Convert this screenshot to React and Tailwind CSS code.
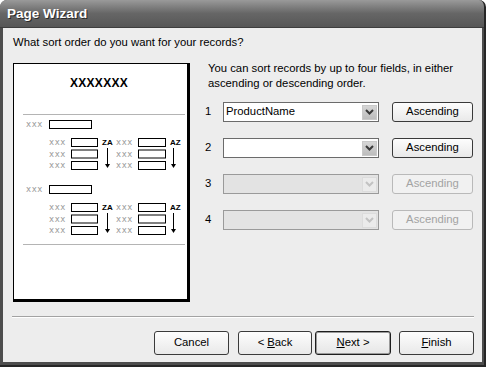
import React from "react";

const FONT = { fontFamily: '"Liberation Sans", Arial, sans-serif' };

function Chevron({ color }) {
  return (
    <svg width="9" height="6" viewBox="0 0 9 6">
      <path d="M1 1 L4.5 4.5 L8 1" fill="none" stroke={color} strokeWidth="2" />
    </svg>
  );
}

function Combo({ value, disabled }) {
  return (
    <div
      className={
        "w-[156px] h-[20px] border flex items-center justify-between pl-[2px] pr-[1px] " +
        (disabled ? "border-[#9a9a9a] bg-[#e3e3e3]" : "border-[#6b6b6b] bg-white")
      }
    >
      <span className="text-[11.3px] text-black leading-none">{value}</span>
      <div
        className={
          "w-[15px] h-[15px] flex items-center justify-center " +
          (disabled ? "bg-[#ebebeb] border border-[#dcdcdc]" : "bg-gradient-to-b from-[#d6d6d6] to-[#bdbdbd] border border-[#c9c9c9]")
        }
      >
        <Chevron color={disabled ? "#c2c2c2" : "#3a3a3a"} />
      </div>
    </div>
  );
}

function Btn({ children, w, disabled, def, h = "h-[20px]" }) {
  return (
    <button
      className={
        w + " " + h +
        " rounded-[3px] border flex items-center justify-center text-[11.3px] leading-none " +
        (disabled
          ? "border-[#b9b9b9] text-[#a3a3a3] bg-[#f1f1f1]"
          : def
          ? "border-[#1e1e1e] text-black bg-gradient-to-b from-[#fafafa] to-[#e6e6e6] shadow-[inset_0_0_0_1px_#9a9a9a]"
          : "border-[#3a3a3a] text-black bg-gradient-to-b from-[#fdfdfd] to-[#e9e9e9]")
      }
      style={FONT}
    >
      {children}
    </button>
  );
}

function X3({ x, y }) {
  return (
    <text x={x} y={y} fontSize="8.5" letterSpacing="0.6" fill="#9c9c9c" fontFamily="DejaVu Sans, sans-serif">xxx</text>
  );
}

function Group({ dy }) {
  const rows = [74, 85.5, 97];
  return (
    <g transform={`translate(0 ${dy})`}>
      <X3 x={12} y={63} />
      <rect x="35.5" y="56.5" width="42" height="8" fill="white" stroke="black" />
      {rows.map((y, i) => (
        <g key={i}>
          <X3 x={35} y={y + 7} />
          <rect x="57.5" y={y + 0.5} width="26" height="8" fill="white" stroke="black" />
          <X3 x={102} y={y + 7} />
          <rect x="124.5" y={y + 0.5} width="27" height="8" fill="white" stroke="black" />
        </g>
      ))}
      <text x="88" y="81" fontSize="8" fontWeight="bold" fill="black" fontFamily="Liberation Sans, Arial, sans-serif">ZA</text>
      <line x1="93.5" y1="84" x2="93.5" y2="101" stroke="black" />
      <path d="M91 100 L96 100 L93.5 104 Z" fill="black" />
      <text x="156" y="81" fontSize="8" fontWeight="bold" fill="black" fontFamily="Liberation Sans, Arial, sans-serif">AZ</text>
      <line x1="159.5" y1="84" x2="159.5" y2="101" stroke="black" />
      <path d="M157 100 L162 100 L159.5 104 Z" fill="black" />
    </g>
  );
}

function Preview() {
  return (
    <div className="w-[177px] h-[239px] shrink-0 bg-white border-l border-t border-black border-r-[3px] border-b-[3px]">
      <svg width="173" height="235" viewBox="0 0 173 235">
        <text x="85" y="23" textAnchor="middle" fontSize="12" fontWeight="bold" letterSpacing="0.3" fill="black" fontFamily="Liberation Sans, Arial, sans-serif">XXXXXXX</text>
        <line x1="9" y1="50.5" x2="171" y2="50.5" stroke="#b4b4b4" />
        <Group dy={0} />
        <Group dy={65} />
        <line x1="9" y1="180.5" x2="171" y2="180.5" stroke="#b4b4b4" />
      </svg>
    </div>
  );
}

function Row({ n, value, disabled }) {
  return (
    <div className="h-[36px] flex items-center">
      <span className="w-[18px] text-[11.3px] text-black leading-none">{n}</span>
      <Combo value={value} disabled={disabled} />
      <div className="ml-[13px]">
        <Btn w="w-[81px]" disabled={disabled}>Ascending</Btn>
      </div>
    </div>
  );
}

export default function App() {
  return (
    <div className="w-[486px] h-[367px] flex flex-col bg-[#4d4d4d] rounded-t-[7px] overflow-hidden border-r-[2px] border-b-[2px] border-[#262626]" style={FONT}>
      <div className="h-[28px] shrink-0 flex items-center pl-[7px] bg-gradient-to-b from-[#9a9a9a] via-[#666666] to-[#575757] border-b border-[#3e3e3e]">
        <span className="text-white font-bold text-[13.5px] leading-none [text-shadow:1px_1px_0_#2a2a2a]">Page Wizard</span>
      </div>
      <div className="flex-1 ml-[3px] mr-[2px] mb-[3px] bg-[#ededed] flex flex-col">
        <div className="pl-[10px] pt-[7px] h-[21px] text-[11.3px] leading-[14px] text-black">
          What sort order do you want for your records?
        </div>
        <div className="flex mt-[14px] pl-[10px]">
          <Preview />
          <div className="ml-[15px] flex flex-col">
            <div className="pl-[3px] mt-[-2px] text-[11.3px] leading-[15px] text-black">
              You can sort records by up to four fields, in either
              <br />
              ascending or descending order.
            </div>
            <div className="mt-[3px] flex flex-col">
              <Row n="1" value="ProductName" />
              <Row n="2" value="" />
              <Row n="3" value="" disabled />
              <Row n="4" value="" disabled />
            </div>
          </div>
        </div>
        <div className="mt-[14px] ml-[9px] mr-[8px] border-t border-[#a3a3a3] border-b border-b-white" />
        <div className="flex justify-end pr-[8px] mt-[13px]">
          <Btn w="w-[75px]" h="h-[24px]">Cancel</Btn>
          <div className="ml-[9px]">
            <Btn w="w-[74px]" h="h-[24px]">&lt; <u className="ml-[3px]">B</u>ack</Btn>
          </div>
          <div className="ml-[3px]">
            <Btn w="w-[76px]" h="h-[24px]" def><u>N</u>ext &gt;</Btn>
          </div>
          <div className="ml-[8px]">
            <Btn w="w-[75px]" h="h-[24px]"><u>F</u>inish</Btn>
          </div>
        </div>
      </div>
    </div>
  );
}
